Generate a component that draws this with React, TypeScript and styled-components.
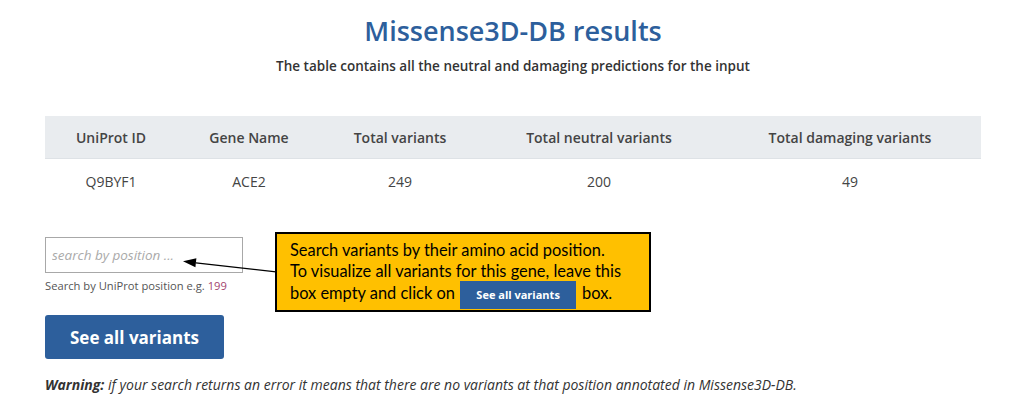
import React from "react";
import styled, { createGlobalStyle } from "styled-components";

const GlobalStyle = createGlobalStyle`
  html, body {
    margin: 0;
    padding: 0;
    background: #ffffff;
  }
  body {
    font-family: "Open Sans", "Noto Sans", sans-serif;
    color: #333333;
  }
`;

const BRAND = "#2d5f9c";

const Page = styled.div`
  width: 1027px;
  height: 405px;
  box-sizing: border-box;
  padding: 0 46px 0 45px;
  overflow: hidden;
`;

const Header = styled.header`
  text-align: center;
  padding-top: 14px;
`;

const Title = styled.h1`
  margin: 0;
  font-size: 27px;
  line-height: 34px;
  font-weight: 600;
  color: ${BRAND};
`;

const Subtitle = styled.p`
  margin: 9px 0 0;
  font-size: 13.5px;
  line-height: 18px;
  font-weight: 600;
  color: #333;
`;

const Table = styled.table`
  margin-top: 41px;
  width: 936px;
  border-collapse: collapse;
  table-layout: fixed;
  font-size: 14px;
`;

const HeadCell = styled.th<{ $w: number }>`
  width: ${(p) => p.$w}px;
  height: 42px;
  padding: 0;
  background: #e9ecef;
  border-bottom: 1px solid #dee2e6;
  font-weight: 600;
  color: #444;
  text-align: center;
`;

const Cell = styled.td`
  height: 45px;
  padding: 0;
  text-align: center;
  color: #444;
`;

const SearchArea = styled.section`
  position: relative;
  margin-top: 33px;
`;

const SearchInput = styled.input`
  display: block;
  box-sizing: border-box;
  width: 198px;
  height: 36px;
  padding: 0 6px;
  border: 1px solid #a8a8a8;
  border-radius: 0;
  font-family: "Open Sans", sans-serif;
  font-size: 13.5px;
  outline: none;
  &::placeholder {
    color: #aaaaaa;
    font-style: italic;
  }
`;

const Help = styled.div`
  margin-top: 5px;
  font-size: 11.2px;
  line-height: 16px;
  color: #555;
`;

const Example = styled.span`
  color: #a3456e;
`;

const BigButton = styled.button`
  display: block;
  margin-top: 21px;
  width: 179px;
  height: 44px;
  border: 0;
  border-radius: 3px;
  background: ${BRAND};
  color: #fff;
  font-family: "Open Sans", sans-serif;
  font-size: 17px;
  font-weight: 700;
  cursor: pointer;
`;

const Warning = styled.p`
  margin: 17px 0 0;
  font-size: 14px;
  line-height: 18px;
  font-style: italic;
  color: #333;
  white-space: nowrap;

  b {
    font-weight: 700;
  }
`;

const Callout = styled.div`
  position: absolute;
  left: 230px;
  top: -5px;
  z-index: 2;
  box-sizing: border-box;
  width: 376px;
  height: 80px;
  padding: 5px 0 0 13px;
  border: 2px solid #000;
  background: #ffc000;
  font-family: Lato, "Liberation Sans", sans-serif;
  font-size: 16.4px;
  line-height: 21px;
  color: #000;
  white-space: nowrap;
`;

const MiniButton = styled.span`
  display: inline-block;
  box-sizing: border-box;
  width: 116px;
  height: 28px;
  margin: 0 6px 0 1px;
  padding-top: 5px;
  background: ${BRAND};
  color: #fff;
  text-align: center;
  font-family: "Open Sans", sans-serif;
  font-size: 11px;
  line-height: 18px;
  font-weight: 700;
`;

const Arrow = styled.svg`
  position: absolute;
  left: 136px;
  top: 19px;
  z-index: 1;
  overflow: visible;
`;

const columns = [
  { label: "UniProt ID", w: 132 },
  { label: "Gene Name", w: 144 },
  { label: "Total variants", w: 158 },
  { label: "Total neutral variants", w: 240 },
  { label: "Total damaging variants", w: 262 },
];

const row = ["Q9BYF1", "ACE2", "249", "200", "49"];

export default function App() {
  return (
    <>
      <GlobalStyle />
      <Page>
        <Header>
          <Title>Missense3D-DB results</Title>
          <Subtitle>The table contains all the neutral and damaging predictions for the input</Subtitle>
        </Header>

        <Table>
          <thead>
            <tr>
              {columns.map((c) => (
                <HeadCell key={c.label} $w={c.w}>
                  {c.label}
                </HeadCell>
              ))}
            </tr>
          </thead>
          <tbody>
            <tr>
              {row.map((v, i) => (
                <Cell key={i}>{v}</Cell>
              ))}
            </tr>
          </tbody>
        </Table>

        <SearchArea>
          <SearchInput placeholder="search by position ..." />
          <Help>
            Search by UniProt position e.g. <Example>199</Example>
          </Help>
          <BigButton>See all variants</BigButton>

          {/* annotation arrow pointing at the input */}
          <Arrow width="96" height="20" viewBox="0 0 96 20">
            <line x1="14.9" y1="6.8" x2="95" y2="15.8" stroke="#000" strokeWidth="1.3" />
            <polygon points="2,5.3 15.4,2.3 14.4,11.3" fill="#000" />
          </Arrow>

          <Callout>
            Search variants by their amino acid position.
            <br />
            To visualize all variants for this gene, leave this
            <br />
            box empty and click on <MiniButton>See all variants</MiniButton>box.
          </Callout>
        </SearchArea>

        <Warning>
          <b>Warning:</b> if your search returns an error it means that there are no variants at that
          position annotated in Missense3D-DB.
        </Warning>
      </Page>
    </>
  );
}
